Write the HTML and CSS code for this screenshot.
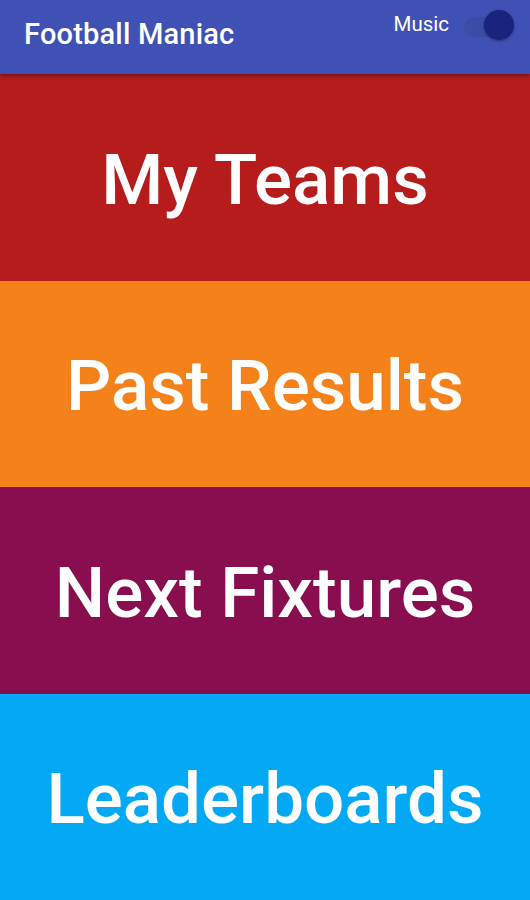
FILE: index.html
```html
<!DOCTYPE html>
<html>
<head>
<meta charset="utf-8">
<link rel="stylesheet" href="styles.css">
</head>
<body>
<div class="app">
  <header class="bar">
    <div class="title">Football Maniac</div>
    <div class="music">
      <span class="music-label">Music</span>
      <span class="switch"><span class="track"></span><span class="thumb"></span></span>
    </div>
  </header>
  <main class="menu">
    <div class="item red">My Teams</div>
    <div class="item orange">Past Results</div>
    <div class="item purple">Next Fixtures</div>
    <div class="item blue">Leaderboards</div>
  </main>
</div>
</body>
</html>
```
FILE: styles.css
```css
html, body { margin: 0; padding: 0; }
body { font-family: Roboto, "Noto Sans", sans-serif; }
.app { width: 530px; height: 900px; display: flex; flex-direction: column; overflow: hidden; }
.bar {
  height: 74px; flex: none; background: #3F51B5; color: #fff;
  display: flex; align-items: flex-start; justify-content: space-between;
  position: relative; z-index: 2; box-shadow: 0 2px 4px rgba(0,0,0,0.35);
}
.title { font-size: 29px; font-weight: 500; margin: 17px 0 0 24px; letter-spacing: 0.2px; }
.music { display: flex; align-items: center; margin: 8px 16px 0 0; gap: 15px; }
.music-label { font-size: 20.5px; color: #fff; }
.switch { position: relative; width: 50px; height: 32px; display: block; }
.track { position: absolute; left: 0; top: 9px; width: 48px; height: 20px; border-radius: 10px; background: #3a4ca8; }
.thumb { position: absolute; right: 0; top: 2px; width: 30px; height: 30px; border-radius: 50%; background: #1A237E; box-shadow: 0 1px 3px rgba(0,0,0,0.4); }
.menu { flex: 1; display: flex; flex-direction: column; }
.item {
  flex: 1; display: flex; align-items: center; justify-content: center;
  color: #fff; font-size: 71px; font-weight: 500; padding-top: 4px;
}
.red { background: #B71C1C; }
.orange { background: #F5811B; }
.purple { background: #880E4F; }
.blue { background: #03A9F4; }
```
